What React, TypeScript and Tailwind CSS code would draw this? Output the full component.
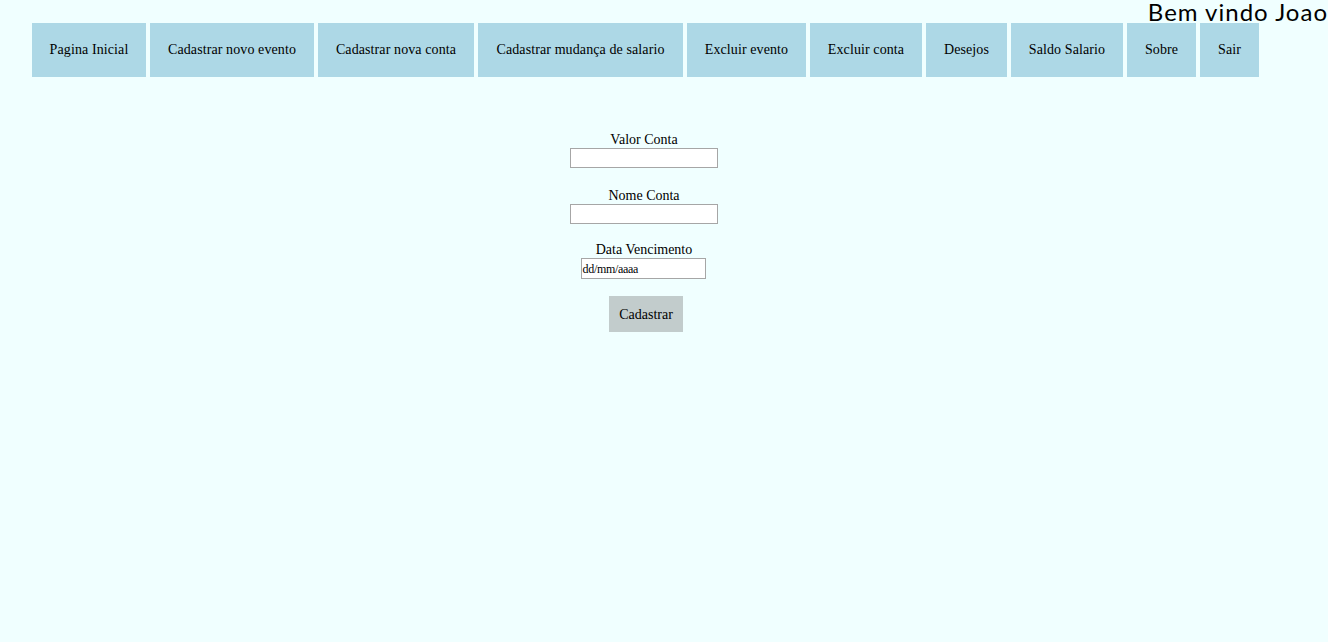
import React from "react";

const navItems: [string, number][] = [
  ["Pagina Inicial", 114],
  ["Cadastrar novo evento", 164],
  ["Cadastrar nova conta", 156],
  ["Cadastrar mudança de salario", 205],
  ["Excluir evento", 119],
  ["Excluir conta", 112],
  ["Desejos", 81],
  ["Saldo Salario", 112],
  ["Sobre", 69],
  ["Sair", 59],
];

const widthClass: Record<number, string> = {
  114: "w-[114px]",
  164: "w-[164px]",
  156: "w-[156px]",
  205: "w-[205px]",
  119: "w-[119px]",
  112: "w-[112px]",
  81: "w-[81px]",
  69: "w-[69px]",
  59: "w-[59px]",
};

export default function App() {
  return (
    <div
      className="min-h-[642px] w-full bg-[#f0ffff] text-black"
      style={{ fontFamily: '"Liberation Serif", "Times New Roman", serif' }}
    >
      <div className="flex h-[23px] justify-end">
        <span
          className="text-[24px] leading-[23px] tracking-[1px]"
          style={{ fontFamily: '"Lato", "DejaVu Sans", sans-serif' }}
        >
          Bem vindo Joao
        </span>
      </div>
      <nav className="flex gap-[4px] pl-[32px]">
        {navItems.map(([item, w]) => (
          <a
            key={item}
            className={`flex h-[54px] items-center justify-center bg-[#add8e6] text-[14px] leading-[16px] tracking-[0.1px] ${widthClass[w]}`}
          >
            {item}
          </a>
        ))}
      </nav>
      <form className="mt-[55px] flex flex-col items-center pr-[40px] text-[14px]">
        <label className="leading-[16px]">Valor Conta</label>
        <div className="h-[20px] w-[148px] border border-[#a6a6a6] bg-white" />
        <label className="mt-[20px] leading-[16px]">Nome Conta</label>
        <div className="h-[20px] w-[148px] border border-[#a6a6a6] bg-white" />
        <label className="mt-[18px] leading-[16px]">Data Vencimento</label>
        <div className="mr-[2px] flex h-[21px] w-[125px] items-center border border-[#a6a6a6] bg-white pl-[1px] text-[12px] tracking-[-0.3px]">
          dd/mm/aaaa
        </div>
        <button
          type="button"
          className="ml-[4px] mt-[17px] flex h-[36px] w-[74px] items-center justify-center bg-[#c2cccc] text-[14px]"
        >
          Cadastrar
        </button>
      </form>
    </div>
  );
}
